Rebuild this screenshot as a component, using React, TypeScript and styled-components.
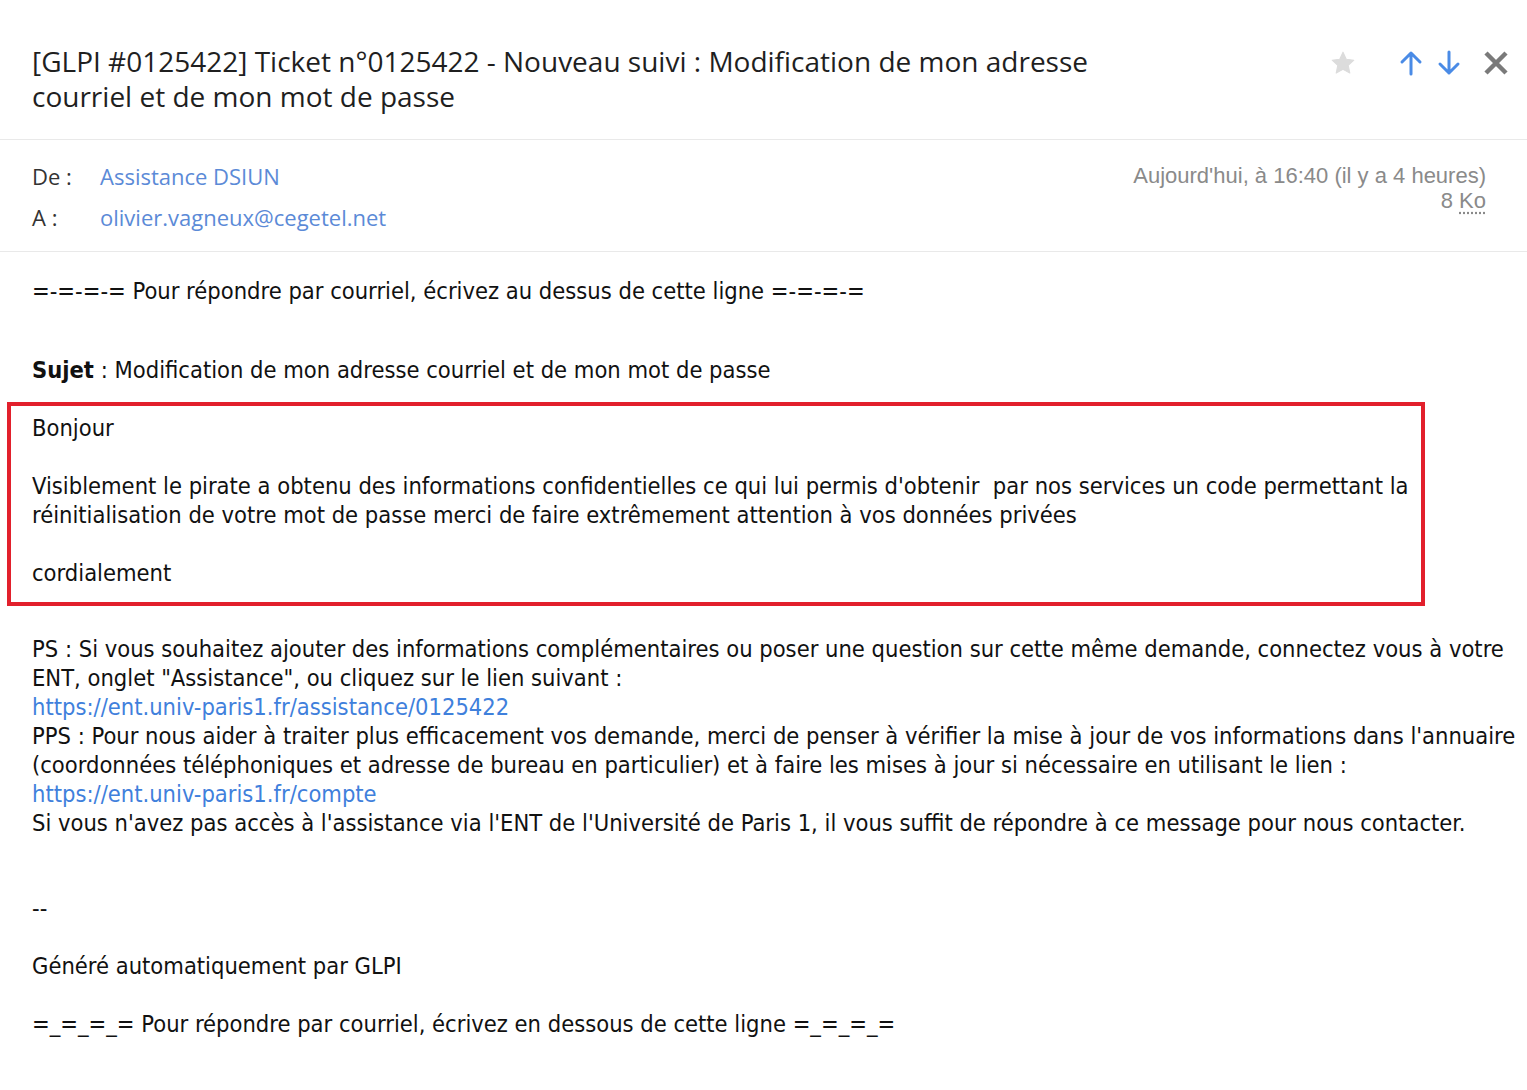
import styled, { createGlobalStyle } from 'styled-components';

const GlobalStyle = createGlobalStyle`
  html, body {
    margin: 0;
    padding: 0;
    background: #fff;
  }
`;

const Page = styled.div`
  width: 1527px;
  min-height: 1090px;
  background: #fff;
  overflow: hidden;
`;

const Header = styled.header`
  display: flex;
  justify-content: space-between;
  align-items: flex-start;
  padding: 44px 18px 25px 32px;
  border-bottom: 1px solid #e9e9e9;
`;

const Title = styled.h1`
  margin: 0;
  font-family: 'Open Sans', sans-serif;
  font-weight: 400;
  font-size: 28px;
  line-height: 35px;
  color: #1f1f1f;
`;

const Actions = styled.div`
  display: flex;
  align-items: center;
  gap: 14px;
  padding-top: 6px;
`;

const IconButton = styled.button<{ $gap?: number }>`
  border: none;
  background: none;
  padding: 0;
  margin-left: ${(p) => p.$gap ?? 0}px;
  display: flex;
  align-items: center;
  justify-content: center;
  cursor: pointer;
`;

const Meta = styled.section`
  display: flex;
  justify-content: space-between;
  padding: 22px 41px 20px 32px;
  border-bottom: 1px solid #e9e9e9;
  font-family: 'Open Sans', sans-serif;
  font-size: 22px;
`;

const People = styled.div`
  display: grid;
  grid-template-columns: 68px auto;
  row-gap: 13px;
  line-height: 28px;
`;

const Label = styled.span`
  color: #333;
`;

const Contact = styled.a`
  color: #5b8ad7;
  text-decoration: none;
`;

const Info = styled.div`
  display: flex;
  flex-direction: column;
  align-items: flex-end;
  padding-top: 1px;
  color: #8a8a8a;
  font-family: 'Liberation Sans', Arial, sans-serif;
  font-size: 22px;
  line-height: 25px;
`;

const Size = styled.abbr`
  text-decoration: underline dotted;
  text-underline-offset: 4px;
`;

const Body = styled.main`
  padding: 25px 20px 40px 32px;
  font-family: 'DejaVu Sans Condensed', 'DejaVu Sans', sans-serif;
  font-size: 23.5px;
  line-height: 29px;
  color: #111;
`;

const Line = styled.div<{ $space?: number }>`
  white-space: nowrap;
  margin-top: ${(p) => p.$space ?? 0}px;
`;

const Highlight = styled.div`
  margin: 17px 0 0 -25px;
  width: 1418px;
  box-sizing: border-box;
  border: 4px solid #e2202c;
  padding: 8px 21px 14px;
`;

const Link = styled.a`
  color: #3f80dc;
  text-decoration: none;
`;

const Star = () => (
  <svg width="26" height="26" viewBox="0 0 24 24">
    <polygon
      points="12,2 15,8.6 22,9.4 16.8,14.2 18.3,21.3 12,17.7 5.7,21.3 7.2,14.2 2,9.4 9,8.6"
      fill="#dcdcdc"
      strokeLinejoin="round"
      stroke="#dcdcdc"
      strokeWidth="1"
    />
  </svg>
);

const Arrow = ({ down }: { down?: boolean }) => (
  <svg width="24" height="26" viewBox="0 0 24 26" style={down ? { transform: 'rotate(180deg)' } : undefined}>
    <path d="M12 24V3M3 12l9-9 9 9" fill="none" stroke="#4a8be6" strokeWidth="3" strokeLinecap="round" strokeLinejoin="round" />
  </svg>
);

const Close = () => (
  <svg width="26" height="26" viewBox="0 0 26 26">
    <path d="M3 3l20 20M23 3L3 23" fill="none" stroke="#7a7a7a" strokeWidth="4.5" />
  </svg>
);

export default function App() {
  return (
    <Page>
      <GlobalStyle />
      <Header>
        <Title>
          [GLPI #0125422] Ticket n°0125422 - Nouveau suivi : Modification de mon adresse
          <br />
          courriel et de mon mot de passe
        </Title>
        <Actions>
          <IconButton>
            <Star />
          </IconButton>
          <IconButton $gap={29}>
            <Arrow />
          </IconButton>
          <IconButton>
            <Arrow down />
          </IconButton>
          <IconButton $gap={8}>
            <Close />
          </IconButton>
        </Actions>
      </Header>

      <Meta>
        <People>
          <Label>De :</Label>
          <Contact>Assistance DSIUN</Contact>
          <Label>A :</Label>
          <Contact>olivier.vagneux@cegetel.net</Contact>
        </People>
        <Info>
          <span>Aujourd'hui, à 16:40 (il y a 4 heures)</span>
          <span>
            8 <Size title="kilo-octets">Ko</Size>
          </span>
        </Info>
      </Meta>

      <Body>
        <Line>=-=-=-= Pour répondre par courriel, écrivez au dessus de cette ligne =-=-=-=</Line>
        <Line $space={50}>
          <b>Sujet</b> : Modification de mon adresse courriel et de mon mot de passe
        </Line>
        <Highlight>
          <Line>Bonjour</Line>
          <Line $space={29}>
            Visiblement le pirate a obtenu des informations confidentielles ce qui lui permis d'obtenir&nbsp; par nos services un code permettant la
          </Line>
          <Line>réinitialisation de votre mot de passe merci de faire extrêmement attention à vos données privées</Line>
          <Line $space={29}>cordialement</Line>
        </Highlight>
        <Line $space={29}>
          PS : Si vous souhaitez ajouter des informations complémentaires ou poser une question sur cette même demande, connectez vous à votre
        </Line>
        <Line>ENT, onglet "Assistance", ou cliquez sur le lien suivant :</Line>
        <Line>
          <Link href="#">https://ent.univ-paris1.fr/assistance/0125422</Link>
        </Line>
        <Line>
          PPS : Pour nous aider à traiter plus efficacement vos demande, merci de penser à vérifier la mise à jour de vos informations dans l'annuaire
        </Line>
        <Line>
          (coordonnées téléphoniques et adresse de bureau en particulier) et à faire les mises à jour si nécessaire en utilisant le lien :
        </Line>
        <Line>
          <Link href="#">https://ent.univ-paris1.fr/compte</Link>
        </Line>
        <Line>
          Si vous n'avez pas accès à l'assistance via l'ENT de l'Université de Paris 1, il vous suffit de répondre à ce message pour nous contacter.
        </Line>
        <Line $space={56}>--</Line>
        <Line $space={29}>Généré automatiquement par GLPI</Line>
        <Line $space={29}>=_=_=_= Pour répondre par courriel, écrivez en dessous de cette ligne =_=_=_=</Line>
      </Body>
    </Page>
  );
}
